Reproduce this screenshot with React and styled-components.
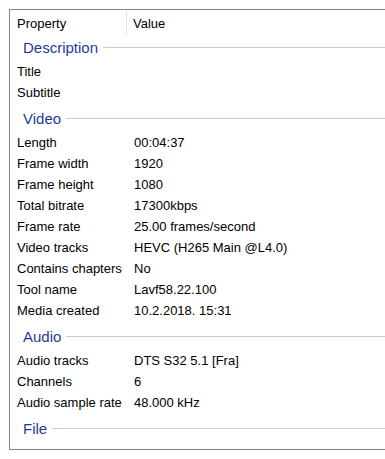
import React from 'react';
import styled, { createGlobalStyle } from 'styled-components';

const Global = createGlobalStyle`
  html, body {
    margin: 0;
    padding: 0;
    background: #ffffff;
    overflow: hidden;
  }
  body {
    font-family: "Liberation Sans", Arial, sans-serif;
  }
`;

const Frame = styled.div`
  margin: 9px 0 0 9px;
  width: 376px;
  height: 439px;
  border: 1px solid #828790;
  border-right: none;
  background: #fff;
  box-sizing: content-box;
`;

const Header = styled.div`
  display: grid;
  grid-template-columns: 117px 1fr;
  height: 26px;
  font-size: 13px;
  color: #000;
`;

const HeaderCell = styled.div`
  display: flex;
  align-items: center;
  padding-left: ${p => (p.$first ? '7px' : '6px')};
  border-right: ${p => (p.$first ? '1px solid #e5e5e5' : 'none')};
`;

const Group = styled.div`
  box-sizing: border-box;
  display: flex;
  align-items: center;
  height: 25px;
  padding: 0 0 2px 13px;
  margin-top: ${p => (p.$first ? '0' : '4px')};
`;

const GroupLabel = styled.span`
  font-size: 15px;
  color: #1e3c96;
`;

const GroupLine = styled.div`
  flex: 1;
  height: 1px;
  margin-left: 5px;
  background: #c3cddd;
`;

const Row = styled.div`
  display: grid;
  grid-template-columns: 117px 1fr;
  height: 21px;
  line-height: 21px;
  font-size: 13px;
  color: #000;
  white-space: nowrap;
`;

const Label = styled.div`
  padding-left: 7px;
`;

const Value = styled.div`
  padding-left: 7px;
`;

const sections = [
  { name: 'Description', rows: [['Title', ''], ['Subtitle', '']] },
  {
    name: 'Video',
    rows: [
      ['Length', '00:04:37'],
      ['Frame width', '1920'],
      ['Frame height', '1080'],
      ['Total bitrate', '17300kbps'],
      ['Frame rate', '25.00 frames/second'],
      ['Video tracks', 'HEVC (H265 Main @L4.0)'],
      ['Contains chapters', 'No'],
      ['Tool name', 'Lavf58.22.100'],
      ['Media created', '10.2.2018. 15:31'],
    ],
  },
  {
    name: 'Audio',
    rows: [
      ['Audio tracks', 'DTS S32 5.1 [Fra]'],
      ['Channels', '6'],
      ['Audio sample rate', '48.000 kHz'],
    ],
  },
  { name: 'File', rows: [] },
];

export default function App() {
  return (
    <>
      <Global />
      <Frame>
        <Header>
          <HeaderCell $first>Property</HeaderCell>
          <HeaderCell>Value</HeaderCell>
        </Header>
        {sections.map((s, i) => (
          <React.Fragment key={s.name}>
            <Group $first={i === 0}>
              <GroupLabel>{s.name}</GroupLabel>
              <GroupLine />
            </Group>
            {s.rows.map(([k, v]) => (
              <Row key={k}>
                <Label>{k}</Label>
                <Value>{v}</Value>
              </Row>
            ))}
          </React.Fragment>
        ))}
      </Frame>
    </>
  );
}
